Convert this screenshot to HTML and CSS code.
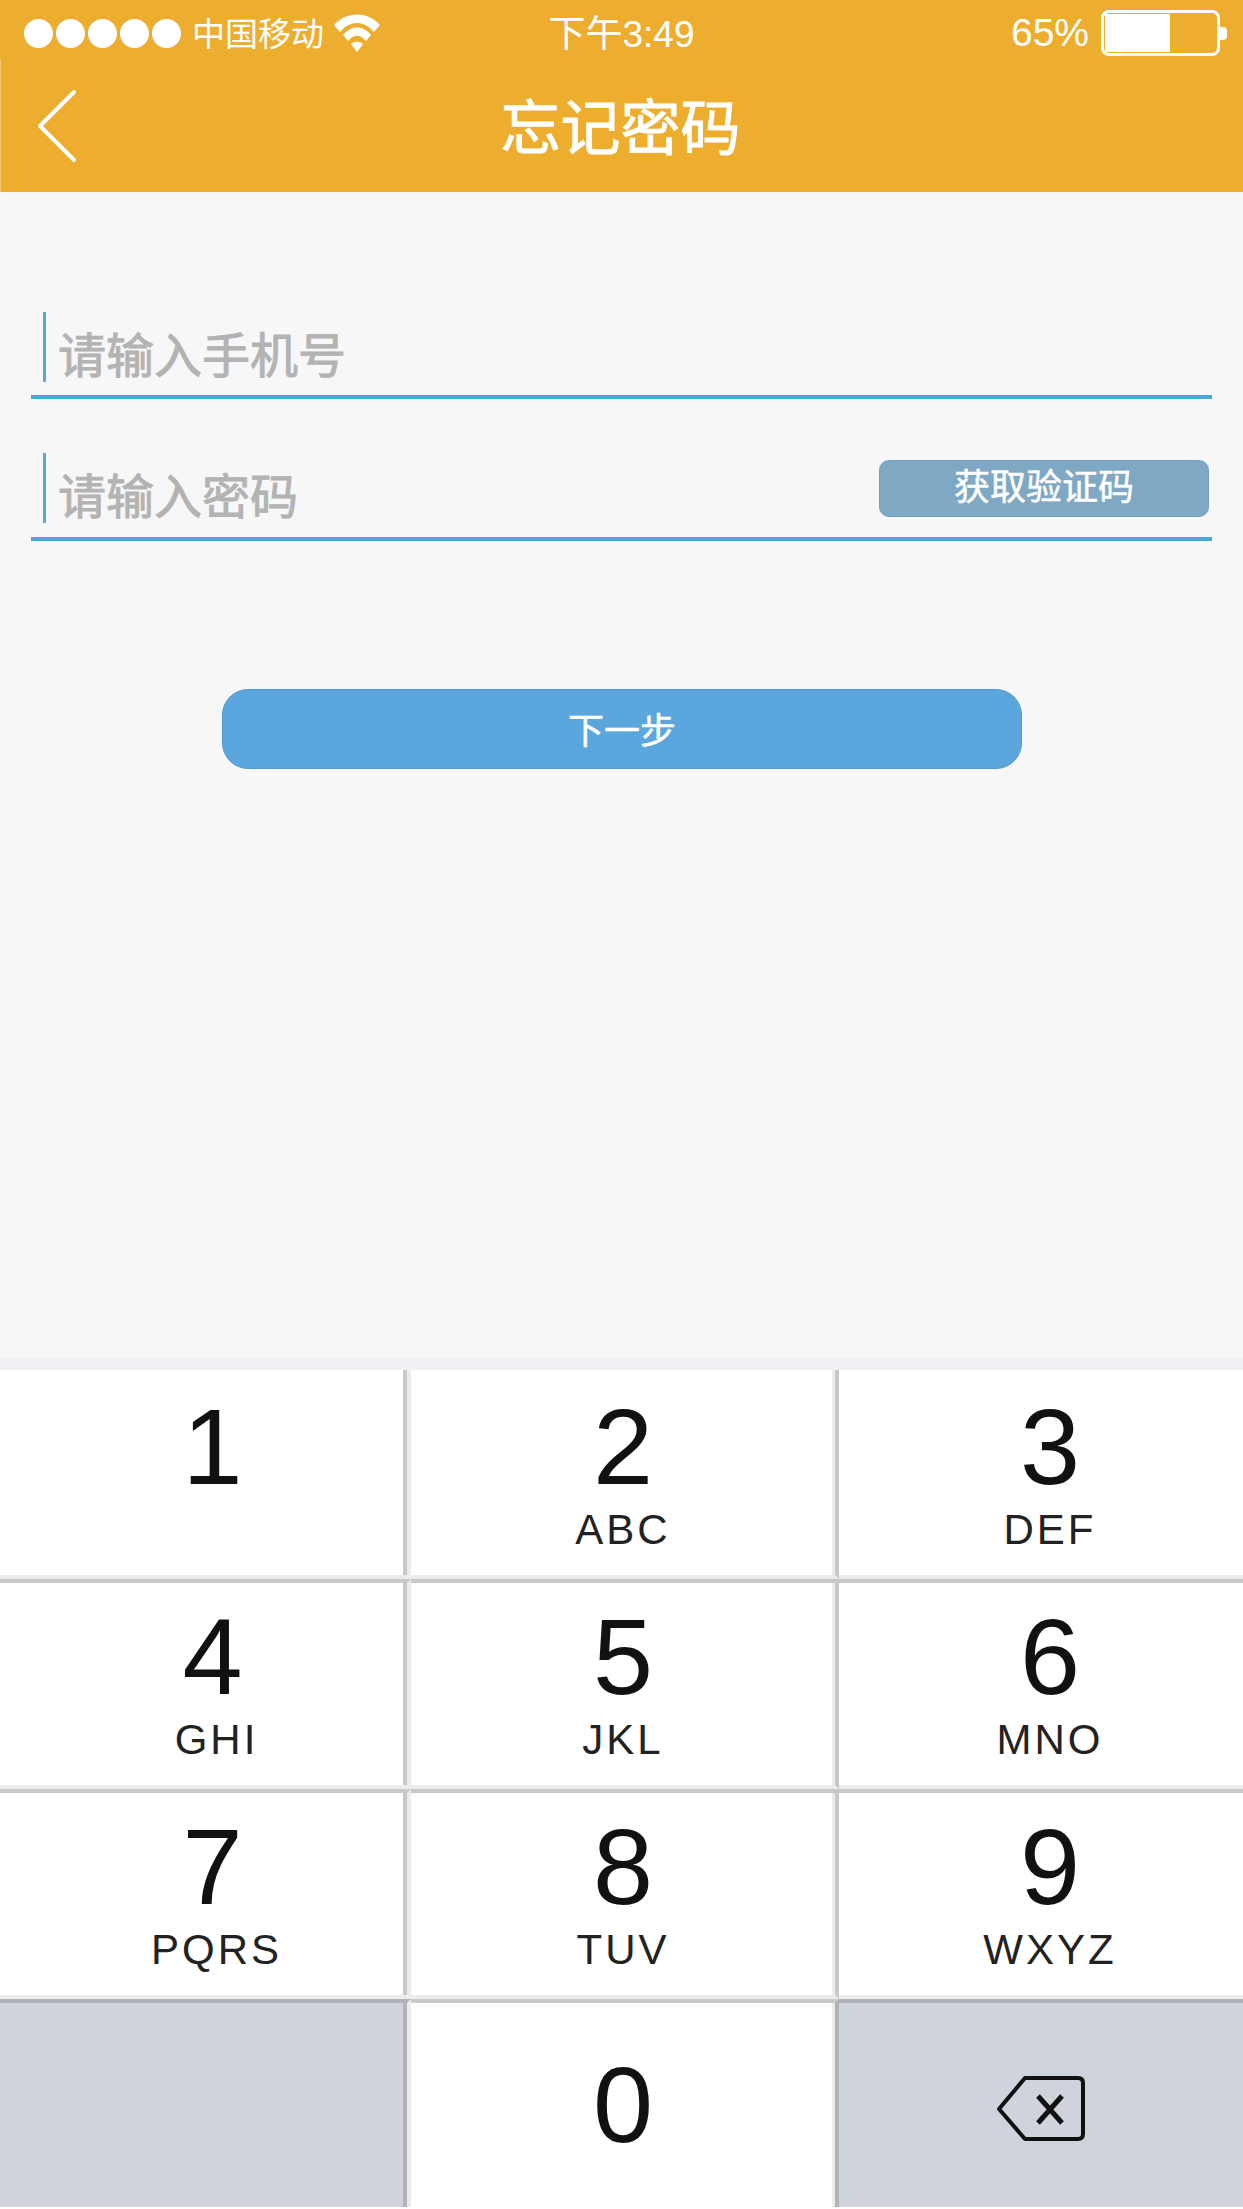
FILE: index.html
```html
<!DOCTYPE html>
<html>
	<head>
		<meta charset="UTF-8"/>
		<meta name="viewport" content="width=device-width, initial-scale=1.0"/>
		<title>忘记密码</title>
		<link rel="stylesheet" href="styles.css">
	</head>
	<body>
		<header class="app-header">
			<div class="status-bar">
				<div class="status-left">
					<div class="signal">
						<span class="dot"></span><span class="dot"></span><span class="dot"></span><span class="dot"></span><span class="dot"></span>
					</div>
					<span class="carrier">中国移动</span>
					<svg class="wifi" width="46" height="38" viewBox="0 0 46 38">
						<path d="M0 11 C12 -3 34 -3 46 11 L40 18 C30 6 16 6 6 18 Z" fill="#fff"/>
						<path d="M9 21 C17 11 29 11 37 21 L32 27 C26 20 20 20 14 27 Z" fill="#fff"/>
						<path d="M17 30 C20 27 26 27 29 30 L23 38 Z" fill="#fff"/>
					</svg>
				</div>
				<span class="clock">下午3:49</span>
				<div class="status-right">
					<span class="percent">65%</span>
					<div class="battery"><div class="battery-level"></div></div>
					<div class="battery-tip"></div>
				</div>
			</div>
			<div class="nav-bar">
				<svg class="back" width="44" height="80" viewBox="0 0 44 80">
					<path d="M39 6 L5 40 L39 74" fill="none" stroke="#fff" stroke-width="4" stroke-linecap="round" stroke-linejoin="round"/>
				</svg>
				<h1 class="title">忘记密码</h1>
			</div>
		</header>

		<main class="form">
			<div class="field">
				<span class="placeholder">请输入手机号</span>
			</div>
			<div class="field field-code">
				<span class="placeholder">请输入密码</span>
				<button class="code-btn">获取验证码</button>
			</div>
			<button class="next-btn">下一步</button>
		</main>

		<section class="keyboard">
			<div class="key col-a first"><span class="num">1</span></div>
			<div class="key col-b first"><span class="num">2</span><span class="letters">ABC</span></div>
			<div class="key col-c first"><span class="num">3</span><span class="letters">DEF</span></div>
			<div class="key col-a"><span class="num">4</span><span class="letters">GHI</span></div>
			<div class="key col-b"><span class="num">5</span><span class="letters">JKL</span></div>
			<div class="key col-c"><span class="num">6</span><span class="letters">MNO</span></div>
			<div class="key col-a"><span class="num">7</span><span class="letters">PQRS</span></div>
			<div class="key col-b"><span class="num">8</span><span class="letters">TUV</span></div>
			<div class="key col-c"><span class="num">9</span><span class="letters">WXYZ</span></div>
			<div class="key col-a bottom gray"></div>
			<div class="key col-b bottom"><span class="num">0</span></div>
			<div class="key col-c bottom gray">
				<svg class="backspace" width="96" height="72" viewBox="0 0 96 72">
					<path d="M31 5 H84 Q89 5 89 10 V61 Q89 66 84 66 H31 L5 36 Z" fill="none" stroke="#111" stroke-width="4" stroke-linejoin="round"/>
					<path d="M44 23 L68 50 M68 23 L44 50" fill="none" stroke="#111" stroke-width="5"/>
				</svg>
			</div>
		</section>
	</body>
</html>
```

FILE: styles.css
```css
* {
	box-sizing: border-box;
}

body {
	margin: 0;
	height: 2209px;
	overflow: hidden;
	background: #f7f7f7;
	font-family: "Liberation Sans", "Noto Sans CJK SC", sans-serif;
	color: #333;
	display: flex;
	flex-direction: column;
}

.app-header {
	height: 192px;
	background: #edae2f;
	color: #fff;
}

.status-bar {
	height: 60px;
	display: grid;
	grid-template-columns: 1fr 1fr 1fr;
	align-items: center;
	padding: 4px 16px 0 24px;
}

.status-left {
	display: flex;
	align-items: center;
}

.signal {
	display: flex;
	gap: 3px;
	margin-right: 11px;
}

.dot {
	width: 29px;
	height: 29px;
	border-radius: 50%;
	background: #fff;
}

.carrier {
	font-size: 33px;
	margin: 0 10px 2px 0;
}

.clock {
	font-size: 37px;
	text-align: center;
	margin: 0 0 4px -8px;
}

.status-right {
	display: flex;
	align-items: center;
	justify-content: flex-end;
}

.percent {
	font-size: 39px;
	margin-right: 12px;
}

.battery {
	width: 119px;
	height: 46px;
	border: 3px solid #fff;
	border-radius: 8px;
	padding: 1px;
}

.battery-level {
	width: 59%;
	height: 100%;
	background: #fff;
}

.battery-tip {
	width: 7px;
	height: 13px;
	background: #fff;
	border-radius: 0 4px 4px 0;
}

.nav-bar {
	height: 132px;
	display: flex;
	align-items: center;
	justify-content: center;
	position: relative;
	border-left: 1px solid #f3c877;
}

.back {
	position: absolute;
	left: 34px;
	top: 26px;
}

.title {
	margin: 0 3px 6px 0;
	font-size: 60px;
	font-weight: normal;
	-webkit-text-stroke: 1px #fff;
}

.form {
	flex: 1;
	padding: 120px 31px 0;
}

.field {
	height: 87px;
	border-bottom: 4px solid #4aa8d8;
	display: flex;
	align-items: flex-end;
	justify-content: space-between;
	margin-bottom: 54px;
	position: relative;
}

.field-code {
	height: 88px;
}

.field::before {
	content: "";
	position: absolute;
	left: 12px;
	top: 0;
	width: 3px;
	height: 70px;
	background: #5aa7dc;
}

.placeholder {
	font-size: 48px;
	line-height: 56px;
	color: #b3b3b3;
	-webkit-text-stroke: 1px #b3b3b3;
	padding: 0 0 10px 27px;
}

.field-code .placeholder {
	padding-bottom: 11px;
}

.code-btn {
	width: 330px;
	height: 57px;
	margin: 0 3px 20px 0;
	background: #7ea8c4;
	border: 1px solid #6fa0c4;
	border-radius: 10px;
	color: #fff;
	font-family: inherit;
	font-size: 36px;
	-webkit-text-stroke: 0.5px #fff;
	line-height: 1;
	padding: 0 0 2px;
}

.next-btn {
	display: block;
	width: 800px;
	height: 80px;
	margin: 148px 0 0 191px;
	background: #5ba7dd;
	border: 1px solid #4f9bd2;
	border-radius: 26px;
	color: #fff;
	font-family: inherit;
	font-size: 36px;
	-webkit-text-stroke: 0.5px #fff;
	padding: 0 0 2px;
}

.keyboard {
	height: 851px;
	background: #f0f0f5;
	padding-top: 12px;
	border-bottom: 2px solid #fff;
	display: grid;
	grid-template-columns: 411px 428px 404px;
	grid-template-rows: 209px 210px 210px 208px;
}

.key {
	background: #fff;
	display: flex;
	flex-direction: column;
	align-items: center;
	border-top: 4px solid #c8c8c8;
	border-bottom: 4px solid #ececec;
	padding-top: 19px;
}

.first {
	border-top: 0;
	padding-top: 22px;
}

.bottom {
	border-bottom: 0;
	padding-top: 47px;
}

.col-a {
	border-right: 4px solid #ececec;
	box-shadow: inset -4px 0 0 #c8c8c8;
	padding-left: 30px;
	padding-right: 4px;
}

.col-b {
	border-right: 4px solid #c8c8c8;
	box-shadow: inset -3px 0 0 #ececec;
}

.col-c {
	padding-left: 18px;
}

.num {
	font-size: 108px;
	line-height: 110px;
	color: #111;
}

.letters {
	font-size: 42px;
	line-height: 40px;
	letter-spacing: 3px;
	color: #222;
	margin-top: 8px;
}

.col-a .num {
	margin-right: 8px;
}

.key.gray {
	background: #cfd3dc;
	border-top-color: #b0b2b7;
	padding-top: 0;
}

.col-a.gray {
	box-shadow: inset -4px 0 0 #b0b2b7;
}

.col-b.bottom {
	border-right-color: #b0b2b7;
}

.backspace {
	margin: 70px 16px 0 0;
}
```
